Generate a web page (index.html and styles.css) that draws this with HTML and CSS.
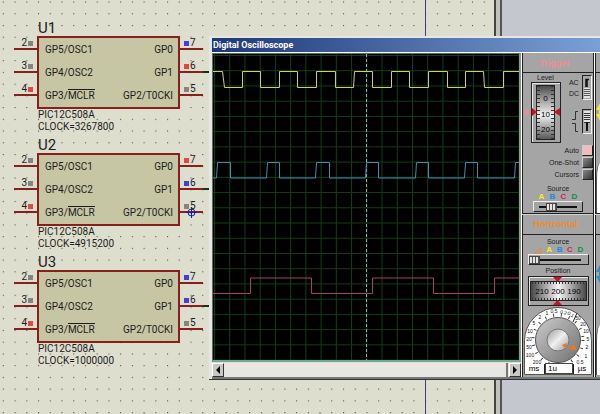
FILE: index.html
```html
<!DOCTYPE html>
<html lang="en">
<head>
    <meta charset="UTF-8">
    <meta name="viewport" content="width=device-width, initial-scale=1.0">
    <title>Digital Oscilloscope</title>
    <link rel="stylesheet" href="styles.css">
</head>
<body>
    <!-- schematic sheet with the dot grid -->
    <div class="sheet">
        <svg class="dots" width="100%" height="100%">
            <defs>
                <pattern id="dot" x="2.8" y="1.5" width="11.73" height="11.73" patternUnits="userSpaceOnUse">
                    <rect width="1.1" height="1.1" fill="#55564b"/>
                </pattern>
            </defs>
            <rect width="100%" height="100%" fill="url(#dot)"/>
        </svg>
        <div class="bus"></div>

        <section class="chip u1">
            <h2>U1</h2>
            <div class="package">
                <ul class="pins left">
                    <li><span>2<i></i></span></li>
                    <li><span>3<i></i></span></li>
                    <li><span>4<i class="high"></i></span></li>
                </ul>
                <div class="body">
                    <ul><li>GP5/OSC1</li><li>GP4/OSC2</li><li>GP3/<span class="bar">MCLR</span></li></ul>
                    <ul><li>GP0</li><li>GP1</li><li>GP2/T0CKI</li></ul>
                </div>
                <ul class="pins right">
                    <li><span><i class="low"></i>7</span></li>
                    <li class="wired"><span><i class="high"></i>6</span></li>
                    <li><span><i></i>5</span></li>
                </ul>
            </div>
            <p>PIC12C508A</p>
            <p>CLOCK=3267800</p>
        </section>

        <section class="chip u2">
            <h2>U2</h2>
            <div class="package">
                <ul class="pins left">
                    <li><span>2<i></i></span></li>
                    <li><span>3<i></i></span></li>
                    <li><span>4<i class="high"></i></span></li>
                </ul>
                <div class="body">
                    <ul><li>GP5/OSC1</li><li>GP4/OSC2</li><li>GP3/<span class="bar">MCLR</span></li></ul>
                    <ul><li>GP0</li><li>GP1</li><li>GP2/T0CKI</li></ul>
                </div>
                <ul class="pins right">
                    <li><span><i class="high"></i>7</span></li>
                    <li class="wired"><span><i class="low"></i>6</span></li>
                    <li><span><i></i>5</span></li>
                </ul>
            </div>
            <p>PIC12C508A</p>
            <p>CLOCK=4915200</p>
        </section>

        <section class="chip u3">
            <h2>U3</h2>
            <div class="package">
                <ul class="pins left">
                    <li><span>2<i></i></span></li>
                    <li><span>3<i></i></span></li>
                    <li><span>4<i class="high"></i></span></li>
                </ul>
                <div class="body">
                    <ul><li>GP5/OSC1</li><li>GP4/OSC2</li><li>GP3/<span class="bar">MCLR</span></li></ul>
                    <ul><li>GP0</li><li>GP1</li><li>GP2/T0CKI</li></ul>
                </div>
                <ul class="pins right">
                    <li><span><i class="low"></i>7</span></li>
                    <li class="wired"><span><i class="low"></i>6</span></li>
                    <li><span><i></i>5</span></li>
                </ul>
            </div>
            <p>PIC12C508A</p>
            <p>CLOCK=1000000</p>
        </section>

        <!-- origin marker -->
        <svg class="origin" width="11" height="11" viewBox="0 0 11 11" fill="none" stroke="#1c1c9c">
            <circle cx="5.5" cy="5.5" r="3.5"/>
            <path d="M5.5 0V11M0 5.5H11"/>
        </svg>
    </div>

    <!-- oscilloscope window -->
    <main class="window">
        <h1>Digital Oscilloscope</h1>
        <div class="content">
            <div class="view">
                <svg class="screen" viewBox="0 0 306 306" preserveAspectRatio="none" fill="none">
                    <defs>
                        <pattern id="grid" x="1" y="1" width="15.23" height="15.23" patternUnits="userSpaceOnUse">
                            <path d="M0 .5H15.23M.5 0V15.23" stroke="#123f18"/>
                        </pattern>
                    </defs>
                    <rect width="306" height="306" fill="#000"/>
                    <rect width="306" height="306" fill="url(#grid)"/>
                    <path d="M153.5 0V306" stroke="#a4aaa4" stroke-dasharray="3 2"/>
                    <path stroke="#d0d068" d="M0 17.5H9.5L11.5 33.5H29.5V17.5H47.5V33.5H66.5V17.5H84.5V33.5H103.5V17.5H122.5V33.5H140.5L141.5 17.5H159.5V33.5H178.5V17.5H196.5V33.5H215.5V17.5H234.5V33.5H252.5V17.5H270.5L271.5 33.5H290.5V17.5H306"/>
                    <path stroke="#3d8fb4" d="M0 124H3.5L4.5 108.5H17.5V124H53.5L54.5 108.5H66.5V124H102.5L103.5 108.5H116.5V124H152.5L153.5 108.5H165.5V124H202.5L203.5 108.5H215.5V124H251.5L252.5 108.5H264.5V124H301.5L302.5 108.5H306"/>
                    <path stroke="#ac3f62" d="M0 239.5H37.5V224H98.5V239.5H159.5V224H220.5V239.5H281.5V224H306"/>
                </svg>
                <div class="scrollbar">
                    <button type="button" aria-label="Scroll left"><svg width="6" height="8"><path d="M5 0V8L1 4Z"/></svg></button>
                    <div class="thumb"></div>
                    <button type="button" aria-label="Scroll right"><svg width="6" height="8"><path d="M1 0V8L5 4Z"/></svg></button>
                </div>
            </div>

            <div class="panel">
                <h2 class="trigger">Trigger</h2>
                <div class="group">
                    <div class="top">
                        <div class="level">
                            <span>Level</span>
                            <svg width="37" height="61" viewBox="-7 0 37 61">
                                <defs>
                                    <linearGradient id="drum" x2="0" y2="1">
                                        <stop offset="0" stop-color="#484848"/>
                                        <stop offset=".25" stop-color="#9c9c9c"/>
                                        <stop offset=".55" stop-color="#f2f2f2"/>
                                        <stop offset=".8" stop-color="#9a9a9a"/>
                                        <stop offset="1" stop-color="#555"/>
                                    </linearGradient>
                                </defs>
                                <path d="M-1 30L-5 25V29H-7V31H-5V35Z" fill="#ea8f98"/>
                                <rect x=".5" y=".5" width="29" height="60" fill="#a3a3a3" stroke="#222"/>
                                <path d="M1.5 60V1.5H29" fill="none" stroke="#e8e8e8"/>
                                <rect x="5.5" y="3.5" width="18" height="54" fill="url(#drum)" stroke="#222"/>
                                <path d="M7.5 4V57M21.5 4V57" stroke="#333" stroke-width="3" stroke-dasharray="1 3"/>
                                <path d="M6 30L1 26V34ZM23 30L29 26V34Z" fill="#d01020"/>
                                <g font-size="8" text-anchor="middle"><text x="14.5" y="19">0</text><text x="14.5" y="35">10</text><text x="14.5" y="50">20</text></g>
                            </svg>
                        </div>
                        <div class="switches">
                            <div class="switch">
                                <div>AC<br>DC</div>
                                <button type="button" aria-label="Coupling"><svg width="8" height="23"><path d="M3 11V3.500H6M4 4V11" stroke="#111" fill="none" stroke-width="1.500"/><rect x="1" y="12" width="6" height="10" fill="#e4e4e4"/><path d="M1 13.500H7M1 15.500H7M1 17.500H7M1 19.500H7" stroke="#555"/></svg></button>
                            </div>
                            <div class="switch">
                                <svg width="7" height="23" fill="none" stroke="#333"><path d="M0 9.500H3.500V1.500H6M0 13.500H3.500V21.500H6"/></svg>
                                <button type="button" aria-label="Edge"><svg width="8" height="23"><rect x="1" y="1" width="6" height="11" fill="#e4e4e4"/><path d="M1 3.500H7M1 5.500H7M1 7.500H7M1 9.500H7M1 12.500H7" stroke="#333"/><path d="M4 12V21" stroke="#111" stroke-width="2"/></svg></button>
                            </div>
                        </div>
                    </div>
                    <div class="modes">
                        <label>Auto<input type="radio" name="mode" checked></label>
                        <label>One-Shot<input type="radio" name="mode"></label>
                        <label>Cursors<input type="checkbox"></label>
                    </div>
                    <div class="source">
                        <label for="trigsrc">Source</label>
                        <div class="channels"><b class="a">A</b><b class="b">B</b><b class="c">C</b><b class="d">D</b></div>
                        <input id="trigsrc" type="range" min="0" max="3" value="1">
                    </div>
                </div>

                <h2 class="horizontal">Horizontal</h2>
                <div class="group">
                    <div class="source wide">
                        <label for="horsrc">Source</label>
                        <div class="channels"><svg width="9" height="7" fill="none" stroke="#e08838"><path d="M1 6.500H8V1Z"/></svg><b class="a">A</b><b class="b">B</b><b class="c">C</b><b class="d">D</b></div>
                        <input id="horsrc" type="range" min="0" max="4" value="0">
                    </div>
                    <div class="position">
                        <span>Position</span>
                        <svg width="61" height="30">
                            <defs>
                                <linearGradient id="roll">
                                    <stop offset="0" stop-color="#444"/>
                                    <stop offset=".25" stop-color="#a0a0a0"/>
                                    <stop offset=".5" stop-color="#f4f4f4"/>
                                    <stop offset=".75" stop-color="#a0a0a0"/>
                                    <stop offset="1" stop-color="#444"/>
                                </linearGradient>
                            </defs>
                            <rect x=".5" y=".5" width="60" height="29" fill="#a3a3a3" stroke="#222"/>
                            <path d="M1.500 29V1.500H60" fill="none" stroke="#e8e8e8"/>
                            <rect x="2.500" y="5.500" width="56" height="19" fill="url(#roll)" stroke="#222"/>
                            <path d="M4 7H57M4 23H57" stroke="#333" stroke-width="2" stroke-dasharray="1 2"/>
                            <path d="M25 1H34L29.500 6ZM25 29H34L29.500 24Z" fill="#d01020"/>
                            <g font-size="8" text-anchor="middle"><text x="14" y="18">210</text><text x="30" y="18">200</text><text x="46" y="18">190</text></g>
                        </svg>
                    </div>
                    <div class="timebase">
                        <svg width="68" height="68">
                            <defs>
                                <linearGradient id="ring" x2="1" y2="1">
                                    <stop offset="0" stop-color="#ccc"/>
                                    <stop offset="1" stop-color="#707070"/>
                                </linearGradient>
                                <linearGradient id="cap" x2="1" y2="1">
                                    <stop offset="0" stop-color="#999"/>
                                    <stop offset=".5" stop-color="#f0f0f0"/>
                                    <stop offset="1" stop-color="#999"/>
                                </linearGradient>
                            </defs>
                            <path d="M.5 67.500V34A33.500 33.500 0 0 1 67.500 34V67.500Z" fill="#fff" stroke="#555"/>
                            <circle cx="34" cy="33" r="25" fill="none" stroke="#444" stroke-width="3" stroke-dasharray="1 7"/>
                            <path d="M49 15L53 6M20.500 57V67M49.500 57V67" stroke="#222"/>
                            <circle cx="34" cy="33" r="22.500" fill="url(#ring)" stroke="#555"/>
                            <circle cx="34" cy="33" r="11" fill="url(#cap)" stroke="#777"/>
                            <path d="M45 42L50 37L53 43ZM38 38L43 36L42 42Z" fill="#e8791c"/>
                            <g font-size="5" text-anchor="middle" fill="#111">
                                <text x="30" y="6">0.5</text><text transform="translate(39 7) rotate(14)">0.2</text><text transform="translate(46 9) rotate(28)">0.1</text>
                                <text x="23" y="8">1</text><text x="16" y="12">2</text><text x="10" y="18">5</text>
                                <text x="6" y="26">10</text><text x="5" y="34">20</text><text x="5" y="42">50</text><text x="6" y="50">100</text><text x="13" y="57">200</text>
                                <text x="54" y="13">50</text><text x="59" y="19">20</text><text x="62" y="26">10</text><text x="64" y="34">5</text><text x="63" y="42">2</text><text x="62" y="51">1</text><text x="56" y="57">0.5</text>
                            </g>
                            <g font-size="8" text-anchor="middle"><text x="10" y="64">ms</text><text x="58" y="64">µs</text></g>
                        </svg>
                        <input type="text" value="1u" aria-label="Time per division">
                    </div>
                </div>
            </div>

            <!-- next panel, cut by the edge -->
            <div class="panel next">
                <h2></h2>
                <div class="group">
                    <svg width="4" height="18"><path d="M4 0L0 7H3V11H0L4 18Z" fill="#f0ec20"/></svg>
                    <div class="dial"></div>
                </div>
                <h2></h2>
                <div class="group">
                    <svg width="4" height="18"><path d="M4 0L0 7H3V11H0L4 18Z" fill="#2590d8"/></svg>
                    <div class="dial"></div>
                </div>
            </div>
        </div>
    </main>
</body>
</html>
```
FILE: styles.css
```css
*{
    margin: 0;
    padding: 0;
    box-sizing: border-box;
}
body{
    min-height: 100vh;
    position: relative;
    overflow: hidden;
    background-color: #c5c7cf;
    font-family: "Liberation Sans", Arial, sans-serif;
    color: #1c1c1c;
}
ul{
    list-style-type: none;
}
/* schematic */
.sheet{
    position: relative;
    width: 84%;
    max-width: 502px;
    height: 100vh;
    background-color: #dedece;
    border-right: 2px solid #55555a;
    box-shadow: inset -4px 0 #c2c2bc, inset -6px 0 #44443e;
    font-family: Roboto, "Liberation Sans", sans-serif;
}
.dots{
    position: absolute;
    padding-right: 6px;
}
.bus{
    position: absolute;
    left: 425px;
    top: 0;
    width: 1px;
    height: 100%;
    background-color: #3c3c90;
}
.chip{
    position: absolute;
    left: 14px;
    width: 189px;
    font-size: 10px;
    line-height: 12px;
}
.u1{ top: 20px; }
.u2{ top: 137px; }
.u3{ top: 254px; }
.chip h2{
    padding-left: 24px;
    font-size: 15px;
    line-height: 16px;
    font-weight: normal;
}
.chip p{
    padding-left: 24px;
}
.package{
    display: flex;
}
.body{
    flex: 1;
    display: flex;
    justify-content: space-between;
    padding: 0 5px 0 6px;
    border: 2px solid #85201c;
    background-color: #c6c6a4;
}
.body li{
    height: 23px;
    line-height: 23px;
}
.body ul:last-child{
    text-align: right;
}
.bar{
    border-top: 1px solid #1c1c1c;
}
.pins{
    width: 23px;
    padding-top: 2px;
}
.pins li{
    position: relative;
    height: 23px;
}
.pins span{
    display: flex;
    align-items: center;
    gap: 1px;
    height: 12px;
    border-bottom: 2px solid #85201c;
}
.left span{
    justify-content: flex-end;
    padding-right: 4px;
}
.right span{
    padding-left: 4px;
}
.pins i{
    width: 5px;
    height: 5px;
    background-color: #85857c;
}
.pins .high{ background-color: #e84444; }
.pins .low{ background-color: #4040d8; }
.wired::after{
    content: "";
    position: absolute;
    left: 100%;
    top: 10px;
    width: 8px;
    height: 2px;
    background-color: #173417;
}
.origin{
    position: absolute;
    left: 186px;
    top: 207px;
}
/* window */
.window{
    position: absolute;
    left: 209px;
    right: 0;
    top: 36px;
    padding: 2px 0 0 3px;
    border-bottom: 1px solid #333;
    background-color: #e6e6e2;
    overflow: hidden;
}
.window h1{
    height: 14px;
    padding-left: 1px;
    font: bold 9px/14px Roboto, "Liberation Sans", sans-serif;
    color: #fff;
    background: linear-gradient(90deg, #1d3878, #7ba0d6);
}
.content{
    display: flex;
    border-top: 1px solid #fff;
    border-bottom: 2px solid #777;
}
.view{
    flex: 1;
    display: flex;
    flex-direction: column;
    background-color: #dcdcd8;
}
.screen{
    display: block;
    flex: 1;
    width: 100%;
    min-height: 0;
    border: 1px solid #5e6e62;
    border-right: 2px solid #8c988c;
    border-bottom: 2px solid #74a890;
}
.scrollbar{
    display: flex;
    height: 14px;
    margin-top: 1px;
    background-color: #e6e6e2;
}
.scrollbar button{
    display: flex;
    align-items: center;
    justify-content: center;
    width: 12px;
    border: 1px solid #fff;
    border-right-color: #333;
    border-bottom-color: #333;
    background-color: #c8c8c4;
}
.thumb{
    flex: 1;
    margin-right: 1px;
    border-right: 2px solid #777;
}
/* control panels */
.panel{
    width: 73px;
    border-left: 1px solid #fff;
    border-right: 1px solid #222;
    box-shadow: inset 1px 0 #222;
    background-color: #a5a5a6;
    font-size: 7px;
    line-height: 9px;
}
.panel h2{
    height: 20px;
    border-bottom: 1px solid #222;
    font-size: 9px;
    line-height: 20px;
    text-align: center;
}
.panel .trigger{
    padding-right: 6px;
    color: #f08c96;
}
.panel .horizontal{
    padding-right: 4px;
    color: #f08a2c;
}
.panel h2:nth-of-type(2){
    height: 22px;
    border-top: 1px solid #222;
    box-shadow: inset 0 1px #d0d0d0;
}
.group{
    height: 140px;
    padding-left: 1px;
}
.group svg{
    display: block;
}
.top{
    display: flex;
    justify-content: space-between;
    height: 71px;
}
.level{
    padding-left: 1px;
}
.level span{
    display: block;
    padding-left: 13px;
}
.switches{
    display: flex;
    flex-direction: column;
    gap: 9px;
    padding: 2px 1px 0 0;
}
.switch{
    display: flex;
    align-items: center;
    justify-content: flex-end;
    gap: 3px;
    line-height: 11px;
}
.switch button{
    border: 1px solid #222;
    border-right-color: #eee;
    border-bottom-color: #eee;
    background-color: #a8a8a8;
}
.modes label{
    display: flex;
    align-items: center;
    justify-content: flex-end;
    gap: 3px;
    height: 12px;
}
.modes input{
    appearance: none;
    width: 11px;
    height: 11px;
    border: 1px solid #ccc;
    border-right-color: #222;
    border-bottom-color: #222;
    background: linear-gradient(135deg, #888, #383838);
}
.modes input:checked{
    background: #f2bcbc;
}
.source{
    width: 50px;
    margin: 0 auto;
    padding-top: 4px;
    text-align: center;
}
.source.wide{
    width: 61px;
    padding-top: 2px;
}
.source label{
    display: block;
}
.channels{
    display: flex;
    justify-content: space-around;
    align-items: center;
    height: 8px;
    padding: 0 3px;
    font-size: 8px;
    line-height: 8px;
}
.a{ color: #f4f010; }
.b{ color: #1c88e0; }
.c{ color: #d81c58; }
.d{ color: #0c9048; }
.source input{
    appearance: none;
    display: block;
    width: 100%;
    height: 11px;
    border: 1px solid #222;
    border-left-color: #eee;
    border-top-color: #eee;
    background: linear-gradient(#111, #111) center / 80% 2px no-repeat #a3a3a3;
}
.source input::-webkit-slider-thumb{
    appearance: none;
    width: 11px;
    height: 8px;
    border: 1px solid #444;
    background: repeating-linear-gradient(90deg, #e4e4e4 0, #e4e4e4 2px, #555 2px, #555 3px);
}
.position{
    width: 61px;
    margin: 0 auto;
    text-align: center;
}
.position span{
    display: block;
    line-height: 11px;
}
.timebase{
    position: relative;
    width: 68px;
    margin: 1px auto 0;
}
.timebase input{
    position: absolute;
    left: 21px;
    bottom: 1px;
    width: 28px;
    height: 11px;
    padding-left: 2px;
    border: 1px solid #444;
    background-color: #fff;
    font: 8px/9px "Liberation Sans", Arial, sans-serif;
}
.panel.next{
    width: 6px;
    border-right: none;
}
.next .group{
    display: flex;
    flex-direction: column;
    justify-content: space-between;
    padding-top: 30px;
}
.dial{
    width: 4px;
    height: 50px;
    border-left: 1px solid #555;
    border-top-left-radius: 4px 16px;
    background-color: #fff;
}
```
